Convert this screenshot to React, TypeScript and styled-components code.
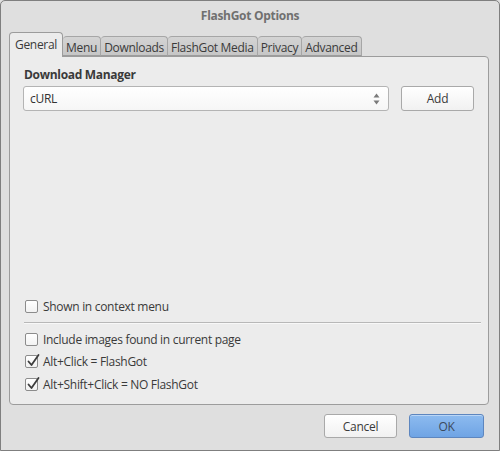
import React from "react";
import styled, { createGlobalStyle } from "styled-components";

const Global = createGlobalStyle`
  html, body { margin: 0; padding: 0; background: #dfdfdf; }
  body { font-family: "Open Sans", "DejaVu Sans", sans-serif; font-size: 12px; letter-spacing: -0.3px; color: #3a3a3a; }
`;

const Window = styled.div`
  box-sizing: border-box;
  width: 500px;
  height: 451px;
  border: 1px solid #7f7f7f;
  border-radius: 5px 5px 0 0;
  background: #dfdfdf;
  display: flex;
  flex-direction: column;
`;

const TitleBar = styled.div`
  height: 29px;
  display: flex;
  align-items: center;
  justify-content: center;
  font-weight: bold;
  color: #707070;
  font-size: 12px;
  flex: none;
`;

const TabRow = styled.div`
  display: flex;
  align-items: flex-end;
  height: 27px;
  padding-left: 8px;
  margin-bottom: -1px;
  position: relative;
  z-index: 1;
  flex: none;
`;

const Tab = styled.div<{ $active?: boolean }>`
  box-sizing: border-box;
  height: ${(p) => (p.$active ? "25px" : "20px")};
  padding: ${(p) => (p.$active ? "3px 5px 0" : "2px 3px 0")};
  display: flex;
  align-items: ${(p) => (p.$active ? "flex-start" : "center")};
  background: ${(p) => (p.$active ? "#ececec" : "linear-gradient(#d4d4d4, #c6c6c6)")};
  border: 1px solid ${(p) => (p.$active ? "#9c9c9c" : "#a6a6a6")};
  border-bottom: ${(p) => (p.$active ? "none" : "1px solid #9c9c9c")};
  border-left: ${(p) => (p.$active ? "1px solid #9c9c9c" : "none")};
  border-radius: 4px 4px 0 0;
  color: #3a3a3a;
  white-space: nowrap;
  margin-bottom: ${(p) => (p.$active ? "0" : "1px")};
`;

const Panel = styled.div`
  box-sizing: border-box;
  margin: 0 10px 0 8px;
  flex: 1;
  background: #ececec;
  border: 1px solid #9c9c9c;
  border-radius: 0 4px 4px 4px;
  padding: 10px 14px 9px 13px;
  display: flex;
  flex-direction: column;
`;

const Label = styled.div`
  font-weight: bold;
  color: #3a3a3a;
  height: 16px;
  line-height: 16px;
  margin-bottom: 3px;
  padding-left: 1px;
`;

const ManagerRow = styled.div`
  display: flex;
  gap: 12px;
`;

const Select = styled.div`
  box-sizing: border-box;
  width: 366px;
  height: 25px;
  background: linear-gradient(#ffffff, #f6f6f6);
  border: 1px solid #b4b4b4;
  border-radius: 3px;
  display: flex;
  align-items: center;
  justify-content: space-between;
  padding: 0 8px 0 6px;
  color: #333;
`;

const Arrows = styled.svg`
  width: 7px;
  height: 12px;
`;

const Button = styled.div<{ $primary?: boolean; $w: number; $h?: number }>`
  box-sizing: border-box;
  width: ${(p) => p.$w}px;
  height: ${(p) => p.$h ?? 24}px;
  display: flex;
  align-items: center;
  justify-content: center;
  border-radius: 3px;
  border: 1px solid ${(p) => (p.$primary ? "#5d86bf" : "#a9a9a9")};
  background: ${(p) =>
    p.$primary ? "linear-gradient(#8dbbef, #6fa4e4)" : "linear-gradient(#ffffff, #f1f1f1)"};
  color: ${(p) => (p.$primary ? "#3c4a5c" : "#3a3a3a")};
  box-shadow: inset 0 1px 0 rgba(255, 255, 255, 0.4);
`;

const Spacer = styled.div`
  flex: 1;
`;

const CheckRow = styled.div<{ $h?: number }>`
  height: ${(p) => p.$h ?? 22}px;
  display: flex;
  align-items: center;
  gap: 5px;
  padding-left: 2px;
`;

const Box = styled.span`
  position: relative;
  box-sizing: border-box;
  width: 13px;
  height: 13px;
  border: 1px solid #8c8c8c;
  border-radius: 2px;
  background: linear-gradient(#ffffff, #f2f2f2);
  flex: none;
`;

const CheckMark = styled.svg`
  position: absolute;
  left: 1px;
  top: -3px;
  width: 13px;
  height: 14px;
  overflow: visible;
`;

const Separator = styled.div`
  height: 1px;
  background: #b8b8b8;
  border-bottom: 1px solid #f8f8f8;
  margin: 5px -7px 6px 1px;
`;

const Footer = styled.div`
  flex: none;
  display: flex;
  justify-content: flex-end;
  gap: 12px;
  padding: 9px 15px 12px 0;
`;

function Check({ label, checked, h }: { label: string; checked?: boolean; h?: number }) {
  return (
    <CheckRow $h={h}>
      <Box>
        {checked && (
          <CheckMark viewBox="0 0 13 14">
            <path
              d="M1.5 8.5 L4.5 12 L11.5 2"
              fill="none"
              stroke="#3d3d3d"
              strokeWidth="1.8"
              strokeLinecap="round"
              strokeLinejoin="round"
            />
          </CheckMark>
        )}
      </Box>
      <span>{label}</span>
    </CheckRow>
  );
}

export default function App() {
  const tabs = ["General", "Menu", "Downloads", "FlashGot Media", "Privacy", "Advanced"];
  return (
    <>
      <Global />
      <Window>
        <TitleBar>FlashGot Options</TitleBar>
        <TabRow>
          {tabs.map((t, i) => (
            <Tab key={t} $active={i === 0}>
              {t}
            </Tab>
          ))}
        </TabRow>
        <Panel>
          <Label>Download Manager</Label>
          <ManagerRow>
            <Select>
              <span>cURL</span>
              <Arrows viewBox="0 0 7 12">
                <path d="M3.5 0.5 L6.5 4.5 L0.5 4.5 Z" fill="#7a7a7a" />
                <path d="M0.5 7.5 L6.5 7.5 L3.5 11.5 Z" fill="#7a7a7a" />
              </Arrows>
            </Select>
            <Button $w={73} $h={25}>Add</Button>
          </ManagerRow>
          <Spacer />
          <Check label="Shown in context menu" />
          <Separator />
          <Check label="Include images found in current page" h={19} />
          <Check label="Alt+Click = FlashGot" checked h={24} />
          <Check label="Alt+Shift+Click = NO FlashGot" checked h={22} />
        </Panel>
        <Footer>
          <Button $w={73}>Cancel</Button>
          <Button $w={75} $primary>
            OK
          </Button>
        </Footer>
      </Window>
    </>
  );
}
